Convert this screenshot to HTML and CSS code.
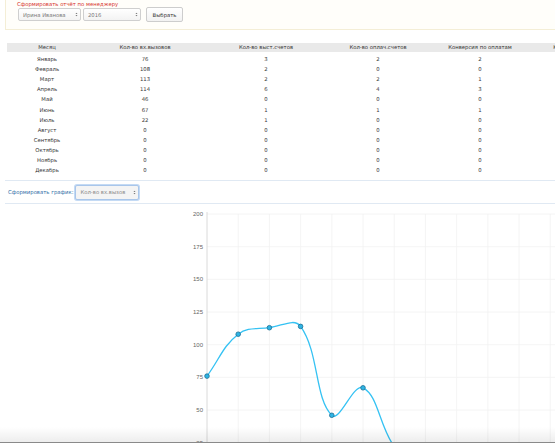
FILE: index.html
```html
<!DOCTYPE html>
<html lang="ru">
<head>
<meta charset="utf-8">
<title>Отчёт по менеджеру</title>
<link rel="stylesheet" href="styles.css">
</head>
<body>
<div class="page">
  <div class="report-panel">
    <div class="report-title">Сформировать отчёт по менеджеру</div>
    <div class="report-controls">
      <div class="select-wrap w-manager">
        <select class="fake-select"><option>Ирина Иванова</option></select>
        <svg class="select-arrow" viewBox="0 0 4 7" width="3" height="5"><path d="M0.5 2.8 L2 1 L3.5 2.8 Z M0.5 4.2 L2 6 L3.5 4.2 Z" fill="#777"/></svg>
      </div>
      <div class="select-wrap w-year">
        <select class="fake-select"><option>2016</option></select>
        <svg class="select-arrow" viewBox="0 0 4 7" width="3" height="5"><path d="M0.5 2.8 L2 1 L3.5 2.8 Z M0.5 4.2 L2 6 L3.5 4.2 Z" fill="#777"/></svg>
      </div>
      <button class="btn">Выбрать</button>
    </div>
  </div>

  <table class="report-table">
    <colgroup>
      <col class="c1"><col class="c2"><col class="c3"><col class="c4"><col class="c5"><col class="c6">
    </colgroup>
    <thead>
      <tr><th>Месяц</th><th>Кол-во вх.вызовов</th><th>Кол-во выст.счетов</th><th>Кол-во оплач.счетов</th><th>Конверсия по оплатам</th><th>Конверсия по вызовам</th></tr>
    </thead>
    <tbody>
      <tr><td>Январь</td><td>76</td><td>3</td><td>2</td><td>2</td><td></td></tr>
      <tr><td>Февраль</td><td>108</td><td>2</td><td>0</td><td>0</td><td></td></tr>
      <tr><td>Март</td><td>113</td><td>2</td><td>2</td><td>1</td><td></td></tr>
      <tr><td>Апрель</td><td>114</td><td>6</td><td>4</td><td>3</td><td></td></tr>
      <tr><td>Май</td><td>46</td><td>0</td><td>0</td><td>0</td><td></td></tr>
      <tr><td>Июнь</td><td>67</td><td>1</td><td>1</td><td>1</td><td></td></tr>
      <tr><td>Июль</td><td>22</td><td>1</td><td>0</td><td>0</td><td></td></tr>
      <tr><td>Август</td><td>0</td><td>0</td><td>0</td><td>0</td><td></td></tr>
      <tr><td>Сентябрь</td><td>0</td><td>0</td><td>0</td><td>0</td><td></td></tr>
      <tr><td>Октябрь</td><td>0</td><td>0</td><td>0</td><td>0</td><td></td></tr>
      <tr><td>Ноябрь</td><td>0</td><td>0</td><td>0</td><td>0</td><td></td></tr>
      <tr><td>Декабрь</td><td>0</td><td>0</td><td>0</td><td>0</td><td></td></tr>
    </tbody>
  </table>

  <div class="chart-controls">
    <span class="chart-label">Сформировать график:</span>
    <div class="select-wrap w-chart focus">
      <select class="fake-select"><option>Кол-во вх.вызов</option></select>
      <svg class="select-arrow" viewBox="0 0 4 7" width="3" height="5"><path d="M0.5 2.8 L2 1 L3.5 2.8 Z M0.5 4.2 L2 6 L3.5 4.2 Z" fill="#777"/></svg>
    </div>
  </div>

  <svg class="chart" viewBox="0 203 555 240" width="555" height="240">
    <g stroke="#f1f1f1" stroke-width="0.8">
      <line x1="207" y1="213" x2="555" y2="213"/>
      <line x1="207" y1="245.7" x2="555" y2="245.7"/>
      <line x1="207" y1="278.3" x2="555" y2="278.3"/>
      <line x1="207" y1="311" x2="555" y2="311"/>
      <line x1="207" y1="343.7" x2="555" y2="343.7"/>
      <line x1="207" y1="376.3" x2="555" y2="376.3"/>
      <line x1="207" y1="409" x2="555" y2="409"/>
      <line x1="207" y1="441.7" x2="555" y2="441.7"/>
      <line x1="238.2" y1="213" x2="238.2" y2="443"/>
      <line x1="269.4" y1="213" x2="269.4" y2="443"/>
      <line x1="300.6" y1="213" x2="300.6" y2="443"/>
      <line x1="331.8" y1="213" x2="331.8" y2="443"/>
      <line x1="363" y1="213" x2="363" y2="443"/>
      <line x1="394.2" y1="213" x2="394.2" y2="443"/>
      <line x1="425.4" y1="213" x2="425.4" y2="443"/>
      <line x1="456.6" y1="213" x2="456.6" y2="443"/>
      <line x1="487.8" y1="213" x2="487.8" y2="443"/>
      <line x1="519" y1="213" x2="519" y2="443"/>
      <line x1="550.2" y1="213" x2="550.2" y2="443"/>
    </g>
    <line x1="207" y1="211" x2="207" y2="443" stroke="#d6d6d6" stroke-width="0.9"/>
    <g class="axis-labels" text-anchor="end">
      <text x="203" y="215">200</text>
      <text x="203" y="247.7">175</text>
      <text x="203" y="280.3">150</text>
      <text x="203" y="313">125</text>
      <text x="203" y="345.7">100</text>
      <text x="203" y="378.3">75</text>
      <text x="203" y="411">50</text>
      <text x="203" y="443.7">25</text>
    </g>
    <path d="M207,375.1 C219.48,358.34 222.7,345.2 238.2,333.2 C247.66,325.86 256.8,328.28 269.4,326.7 C281.76,325.16 294.39,316.68 300.6,325.4 C319.35,351.72 314.48,397.26 331.8,414.3 C339.44,421.82 353.4,381.99 363,386.8 C378.36,394.51 378.96,424.21 394.2,445.6" fill="none" stroke="#35c2f3" stroke-width="1.3"/>
    <g fill="#2fb4e4" stroke="#1d6f94" stroke-width="0.8">
      <circle cx="207" cy="375.1" r="2.3"/>
      <circle cx="238.2" cy="333.2" r="2.3"/>
      <circle cx="269.4" cy="326.7" r="2.3"/>
      <circle cx="300.6" cy="325.4" r="2.3"/>
      <circle cx="331.8" cy="414.3" r="2.3"/>
      <circle cx="363" cy="386.8" r="2.3"/>
    </g>
  </svg>
  <div class="bottom-fade"></div>
</div>
</body>
</html>
```
FILE: styles.css
```css
html, body {
  margin: 0;
  padding: 0;
  background: #fff;
}
body {
  width: 555px;
  height: 443px;
  overflow: hidden;
  font-family: "DejaVu Sans", Verdana, sans-serif;
  font-size: 5.3px;
  color: #333;
}
.page {
  position: relative;
  width: 555px;
  height: 443px;
  overflow: hidden;
}
.report-panel {
  margin-left: 5px;
  height: 29px;
  border-left: 1px solid #f4eed6;
  border-bottom: 1px solid #f4eed6;
  background: #fffefa;
  padding-left: 11px;
  box-sizing: content-box;
}
.report-title {
  padding-top: 1px;
  line-height: 6px;
  height: 6px;
  color: #d6322c;
}
.report-controls {
  display: flex;
  align-items: center;
  height: 15px;
}
.select-wrap {
  position: relative;
  height: 13px;
  box-sizing: border-box;
}
.w-manager { width: 63px; margin-left: 1px; }
.w-year { width: 58px; margin-left: 2px; }
.w-chart { width: 64px; height: 15px; }
.fake-select {
  -webkit-appearance: none;
  appearance: none;
  display: block;
  width: 100%;
  height: 100%;
  margin: 0;
  padding: 0 0 0 4px;
  border: 1px solid #cfcfcf;
  border-radius: 2px;
  background: linear-gradient(#ffffff, #f3f3f3);
  font-family: "DejaVu Sans", Verdana, sans-serif;
  font-size: 5.3px;
  color: #777;
  box-sizing: border-box;
  outline: none;
}
.select-arrow {
  position: absolute;
  right: 3px;
  top: 50%;
  margin-top: -2.5px;
}
.w-chart .fake-select {
  border: 1px solid #a9c6ea;
  background: #f4f4f4;
  box-shadow: 0 0 0 1px #c4daf4;
  color: #888;
}
.btn {
  margin-left: 5px;
  height: 15px;
  width: 37px;
  padding: 0;
  border: 1px solid #cdcdcd;
  border-radius: 2px;
  background: linear-gradient(#ffffff, #f2f2f2);
  font-family: "DejaVu Sans", Verdana, sans-serif;
  font-size: 5.3px;
  color: #333;
  box-sizing: border-box;
}
.report-table {
  margin: 13px 0 0 7px;
  border-collapse: collapse;
  table-layout: fixed;
  width: 630px;
}
.c1 { width: 80px; }
.c2 { width: 116px; }
.c3 { width: 126px; }
.c4 { width: 98px; }
.c5 { width: 106px; }
.c6 { width: 104px; }
.report-table th {
  height: 9px;
  padding: 0;
  line-height: 9px;
  font-weight: normal;
  background: #e9e9e9;
  color: #333;
  text-align: center;
  white-space: nowrap;
  overflow: hidden;
}
.report-table td {
  height: 10.1px;
  padding: 0;
  line-height: 10px;
  text-align: center;
  color: #333;
}
.report-table tbody tr:first-child td {
  padding-top: 2px;
}
.chart-controls {
  margin: 5px 0 0 5px;
  height: 22px;
  border-top: 1px solid #e0e9f3;
  border-bottom: 1px solid #e0e9f3;
  display: flex;
  align-items: center;
  padding-left: 3px;
}
.chart-label {
  color: #2f6ea6;
  margin-right: 2px;
}
.chart {
  display: block;
}
.axis-labels text {
  font-family: "Liberation Sans", Arial, sans-serif;
  font-size: 6px;
  fill: #666;
}
.bottom-fade {
  position: absolute;
  left: 0;
  right: 0;
  bottom: 0;
  height: 16px;
  background: linear-gradient(rgba(0,0,0,0), rgba(0,0,0,0.07));
  border-bottom: 1px solid #8a8a8a;
  box-sizing: border-box;
}
```
